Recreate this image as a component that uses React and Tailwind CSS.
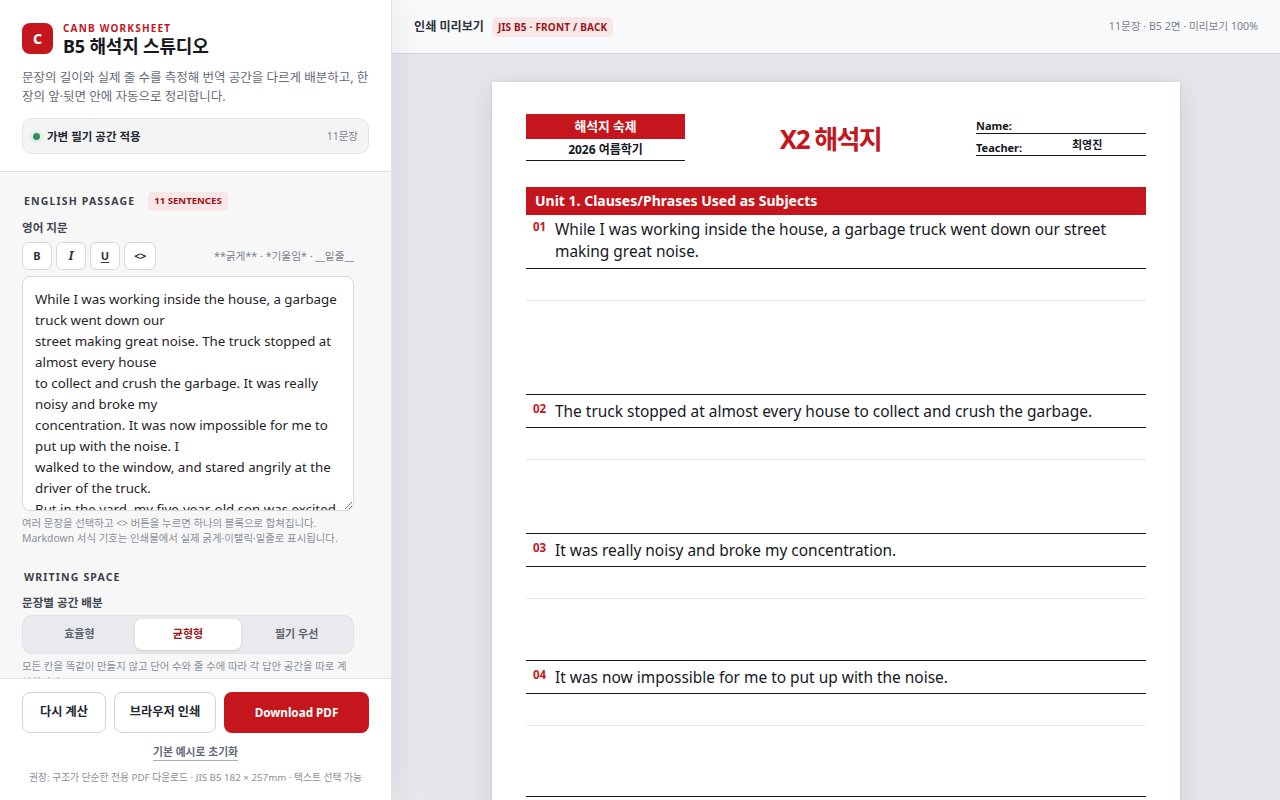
const passage = `While I was working inside the house, a garbage truck went down our
street making great noise. The truck stopped at almost every house
to collect and crush the garbage. It was really noisy and broke my
concentration. It was now impossible for me to put up with the noise. I
walked to the window, and stared angrily at the driver of the truck.
But in the yard, my five-year-old son was excited`;

const sentences = [
  { no: '01', text: 'While I was working inside the house, a garbage truck went down our street making great noise.', space: 'h-[125px]', row: 'pt-[3px] pb-[6px]' },
  { no: '02', text: 'The truck stopped at almost every house to collect and crush the garbage.', space: 'h-[105px]', row: 'border-t pt-[5px] pb-[5px]' },
  { no: '03', text: 'It was really noisy and broke my concentration.', space: 'h-[93px]', row: 'border-t pt-[5px] pb-[5px]' },
  { no: '04', text: 'It was now impossible for me to put up with the noise.', space: 'h-[102px]', row: 'border-t pt-[5px] pb-[5px]' },
];

function Sidebar() {
  return (
    <aside className="relative z-10 w-[392px] h-full shrink-0 flex flex-col bg-[#f7f7f8] border-r border-[#dfe1e6] shadow-[8px_0_28px_rgba(20,25,40,0.05)]">
      <header className="h-[172px] shrink-0 bg-white border-b border-[#dfe1e6] pt-[22px] px-[22px]">
        <div className="flex items-start gap-[10px]">
          <div className="mt-[1px] w-[31px] h-[31px] rounded-[8px] bg-[#c4161c] text-white text-[14px] font-extrabold flex items-center justify-center">C</div>
          <div>
            <p className="text-[10px] leading-[12px] font-bold tracking-[0.12em] text-[#c4161c]">CANB WORKSHEET</p>
            <h1 className="text-[18px] leading-[24px] font-bold text-[#15181e] tracking-[-0.01em]">B5 해석지 스튜디오</h1>
          </div>
        </div>
        <p className="mt-[10px] text-[12.5px] leading-[19px] text-[#646b78] w-[347px]">문장의 길이와 실제 줄 수를 측정해 번역 공간을 다르게 배분하고, 한 장의 앞·뒷면 안에 자동으로 정리합니다.</p>
        <div className="mt-[12px] w-[347px] h-[36px] pt-[1px] rounded-[10px] bg-[#f4f4f5] border border-[#e2e4e8] flex items-center justify-between pl-[7px] pr-[10px]">
          <div className="flex items-center gap-[4px]">
            <span className="w-[13px] h-[13px] rounded-full bg-[#e3efe8] flex items-center justify-center">
              <span className="w-[7px] h-[7px] rounded-full bg-[#2f8f57]" />
            </span>
            <span className="text-[11.5px] font-bold text-[#252a33]">가변 필기 공간 적용</span>
          </div>
          <span className="text-[10.5px] text-[#7c828d]">11문장</span>
        </div>
      </header>

      <div className="flex-1 min-h-0 overflow-hidden pl-[22px] w-[354px] box-content">
        <div className="mt-[20px] flex items-center gap-[13px] pl-[2px]">
          <h2 className="text-[10.5px] font-bold tracking-[0.11em] text-[#3b404b]">ENGLISH PASSAGE</h2>
          <span className="h-[19px] px-[6px] rounded-[5px] bg-[#f9e6e7] text-[#9b1419] text-[9.6px] font-bold flex items-center">11 SENTENCES</span>
        </div>
        <p className="mt-[9px] text-[11.6px] leading-[16px] font-semibold text-[#434955]">영어 지문</p>
        <div className="mt-[6px] w-[332px] flex items-center justify-between">
          <div className="flex gap-[4px]">
            <button className="w-[30px] h-[28px] rounded-[6px] bg-white border border-[#d5d8df] text-[11px] font-bold text-[#2f343d]">B</button>
            <button className="w-[30px] h-[28px] rounded-[6px] bg-white border border-[#d5d8df] text-[12px] italic font-bold text-[#2f343d]">I</button>
            <button className="w-[30px] h-[28px] rounded-[6px] bg-white border border-[#d5d8df] text-[11px] font-bold underline underline-offset-2 text-[#2f343d]">U</button>
            <button className="w-[32px] h-[28px] rounded-[6px] bg-white border border-[#d5d8df] text-[11px] font-bold tracking-[-0.06em] text-[#2f343d]">&lt;&gt;</button>
          </div>
          <span className="text-[10.7px] text-[#7c828d]">**굵게** · *기울임* · __밑줄__</span>
        </div>
        <textarea
          readOnly
          value={passage}
          className="block mt-[6px] w-[332px] h-[235px] rounded-[8px] bg-white border border-[#d5d8df] px-[12px] py-[12px] text-[13.3px] leading-[21px] text-[#1f2329] outline-none overflow-hidden"
        />
        <p className="mt-[5px] w-[332px] text-[10.4px] leading-[15px] text-[#8a909b]">여러 문장을 선택하고 &lt;&gt; 버튼을 누르면 하나의 블록으로 합쳐집니다.<br />Markdown 서식 기호는 인쇄물에서 실제 굵게·이탤릭·밑줄로 표시됩니다.</p>
        <h2 className="mt-[23px] pl-[2px] text-[10.5px] leading-[16px] font-bold tracking-[0.11em] text-[#3b404b]">WRITING SPACE</h2>
        <p className="mt-[10px] text-[11.6px] leading-[16px] font-semibold text-[#434955]">문장별 공간 배분</p>
        <div className="mt-[4px] w-[332px] h-[39px] rounded-[10px] bg-[#e9eaee] border border-[#e0e2e7] p-[3px] grid grid-cols-3 gap-[2px]">
          <button className="text-[11px] font-bold text-[#5c626e]">효율형</button>
          <button className="rounded-[7px] bg-white shadow-sm text-[11px] font-bold text-[#9b1419]">균형형</button>
          <button className="text-[11px] font-bold text-[#5c626e]">필기 우선</button>
        </div>
        <p className="mt-[5px] w-[332px] text-[10.4px] leading-[15.5px] text-[#8a909b]">모든 칸을 똑같이 만들지 않고 단어 수와 줄 수에 따라 각 답안 공간을 따로 계산합니다.</p>
      </div>

      <footer className="h-[122px] shrink-0 bg-white border-t border-[#dfe1e6] px-[22px] pt-[13px]">
        <div className="flex gap-[8px]">
          <button className="w-[84px] h-[41px] rounded-[8px] bg-white border border-[#cfd3db] text-[12.2px] font-bold text-[#23272f]">다시 계산</button>
          <button className="w-[102px] h-[41px] rounded-[8px] bg-white border border-[#cfd3db] text-[12.2px] font-bold text-[#23272f]">브라우저 인쇄</button>
          <button className="w-[145px] h-[41px] rounded-[8px] bg-[#c4161c] text-[11.7px] font-bold text-white">Download PDF</button>
        </div>
        <div className="mt-[5px] text-center">
          <span className="text-[10.8px] leading-[16px] font-semibold text-[#646b78] border-b border-[#a9aeb8] inline-block">기본 예시로 초기화</span>
        </div>
        <p className="mt-[9px] text-center text-[9.75px] text-[#8a909b] whitespace-nowrap">권장: 구조가 단순한 전용 PDF 다운로드 · JIS B5 182 × 257mm · 텍스트 선택 가능</p>
      </footer>
    </aside>
  );
}

function Sentence({ no, text, space, row }) {
  return (
    <div>
      <div className={`flex border-b border-[#15181e] ${row}`}>
        <span className="w-[29px] pl-[7px] text-[11.5px] leading-[18px] font-bold text-[#c4161c] shrink-0">{no}</span>
        <p className="flex-1 text-[15.45px] leading-[22px] text-[#15181e]">{text}</p>
      </div>
      <div className={space}>
        <div className="h-[32px] border-b border-[#e2e4e8]" />
      </div>
    </div>
  );
}

export default function App() {
  return (
    <div className="w-[1280px] h-[800px] overflow-hidden flex bg-[#e6e7eb] font-['Noto_Sans','Noto_Sans_CJK_KR',sans-serif]">
      <Sidebar />
      <main className="flex-1 min-w-0 flex flex-col">
        <div className="h-[54px] shrink-0 bg-[#f8f9fb] border-b border-[#d5d8df] pt-[1px] px-[22px] flex items-center justify-between">
          <div className="flex items-center gap-[8px]">
            <span className="text-[12.1px] font-bold text-[#2f343d]">인쇄 미리보기</span>
            <span className="h-[20px] px-[6px] rounded-[5px] bg-[#f9e6e7] text-[#9b1419] text-[10px] tracking-[0.02em] font-bold flex items-center">JIS B5 · FRONT / BACK</span>
          </div>
          <span className="text-[10.65px] text-[#7c828d]">11문장 · B5 2면 · 미리보기 100%</span>
        </div>
        <div className="flex-1 min-h-0 overflow-hidden pt-[28px] flex justify-center">
          <div className="w-[688px] h-[970px] shrink-0 bg-white shadow-[0_0_2px_rgba(20,25,40,0.12),0_8px_28px_rgba(20,25,40,0.12)] px-[34px] pt-[32px]">
            <div className="flex items-start justify-between h-[73px]">
              <div className="w-[159px]">
                <div className="h-[25px] bg-[#c4161c] text-white text-[12.8px] font-bold flex items-center justify-center">해석지 숙제</div>
                <div className="h-[22px] border-b border-[#15181e] text-[12px] font-bold text-[#15181e] flex items-center justify-center">2026 여름학기</div>
              </div>
              <h1 className="mt-[4px] text-[26px] leading-[42px] font-bold tracking-[-0.06em] text-[#c4161c]">X2 해석지</h1>
              <div className="w-[170px] pt-[3px] text-[11px] font-bold text-[#15181e]">
                <div className="h-[17px] border-b border-[#15181e] leading-[17px]">Name:</div>
                <div className="h-[22px] border-b border-[#15181e] flex items-end leading-[15px]">
                  <span className="w-[96px]">Teacher:</span><span className="mb-[3px]">최영진</span>
                </div>
              </div>
            </div>
            <div className="h-[28px] pb-[2px] bg-[#c4161c] text-white text-[14px] font-bold flex items-center pl-[9px]">Unit 1. Clauses/Phrases Used as Subjects</div>
            {sentences.map(s => <Sentence key={s.no} {...s} />)}
            <div className="border-t border-[#15181e]" />
          </div>
        </div>
      </main>
    </div>
  );
}
